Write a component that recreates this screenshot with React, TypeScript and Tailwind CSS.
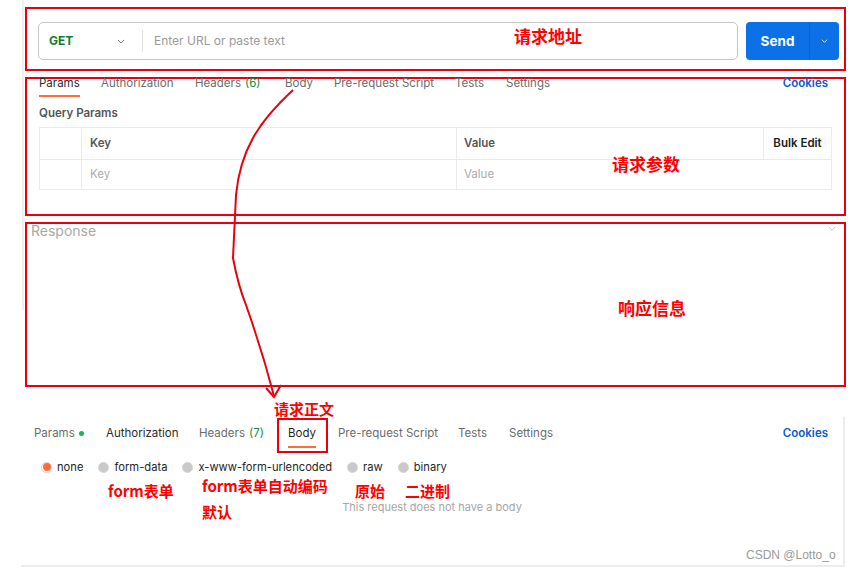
import React from 'react';

interface TabDef {
  label: string;
  w: string;
  count?: string;
  tone?: string;
  active?: boolean;
  dot?: boolean;
}

const topTabs: TabDef[] = [
  { label: 'Params', w: 'w-[62px]', active: true, tone: 'text-[#2b2b2b]' },
  { label: 'Authorization', w: 'w-[94px]' },
  { label: 'Headers', count: '(6)', w: 'w-[90px]' },
  { label: 'Body', w: 'w-[49px]' },
  { label: 'Pre-request Script', w: 'w-[121px]' },
  { label: 'Tests', w: 'w-[51px]' },
  { label: 'Settings', w: 'w-[60px]' },
];

const bottomTabs: TabDef[] = [
  { label: 'Params', w: 'w-[72px]', dot: true },
  { label: 'Authorization', w: 'w-[93px]', tone: 'text-[#2b2b2b]' },
  { label: 'Headers', count: '(7)', w: 'w-[89px]' },
  { label: 'Body', w: 'w-[50px]', active: true, tone: 'text-[#1f1f1f]' },
  { label: 'Pre-request Script', w: 'w-[120px]' },
  { label: 'Tests', w: 'w-[51px]' },
  { label: 'Settings', w: 'w-[60px]' },
];

const bodyTypes = ['none', 'form-data', 'x-www-form-urlencoded', 'raw', 'binary'];

function Chevron({ className }: { className?: string }) {
  return (
    <svg viewBox="0 0 10 6" className={className} fill="none" stroke="currentColor" strokeWidth={1.2}>
      <path d="M1 1l4 4 4-4" />
    </svg>
  );
}

function Tab({ tab, boxed }: { tab: TabDef; boxed?: boolean }) {
  return (
    <div className={`flex shrink-0 items-start ${tab.w}`}>
      <div className="relative flex flex-col">
        <span className={`flex items-center text-[11.5px] leading-[14px] whitespace-nowrap ${tab.tone ?? 'text-[#6b6b6b]'}`}>
          {tab.label}
          {tab.count && <span className="ml-[4px] text-[#168a45]">{tab.count}</span>}
          {tab.dot && <span className="ml-[4px] h-[5px] w-[5px] rounded-full bg-[#0cbb52]" />}
        </span>
        {tab.active && <div className={`${boxed ? 'mt-[6px]' : 'mt-[5px]'} h-[2px] bg-[#ff6c37]`} />}
        {boxed && (
          <span className="absolute -left-[11px] -top-[8px] h-[35px] w-[51px] border-2 border-[#e8000f]" />
        )}
      </div>
    </div>
  );
}

const note = "absolute font-['Noto_Sans_CJK_SC',sans-serif] font-bold leading-none text-[#f00] whitespace-nowrap";

export default function App() {
  return (
    <div className="relative h-[571px] w-[852px] overflow-hidden bg-white font-['Inter',sans-serif]">
      <div className="absolute left-[22px] top-0 h-[310px] w-[2px] bg-[#efefef]" />

      <div className="flex flex-col pl-[25px] pr-[6px] pt-[7px]">
        {/* request url */}
        <div className="flex h-[64px] gap-[8px] border-2 border-[#e8000f] pl-[11px] pt-[13px]">
          <div className="flex h-[38px] w-[700px] items-center rounded-[5px] border border-[#c8c8c8]">
            <div className="flex w-[103px] items-center justify-between pl-[10px] pr-[17px]">
              <span className="text-[12px] font-bold text-[#107c2e]">GET</span>
              <Chevron className="h-[5px] w-[8px] text-[#6b6b6b]" />
            </div>
            <div className="h-[22px] w-px bg-[#e3e3e3]" />
            <span className="pl-[11px] text-[12px] text-[#9b9b9b]">Enter URL or paste text</span>
          </div>
          <div className="flex h-[38px] w-[93px] overflow-hidden rounded-[4px] bg-[#0c71e6] text-white">
            <div className="flex w-[63px] items-center justify-center text-[13.5px] font-bold">Send</div>
            <div className="w-px bg-[#0b62c9]" />
            <div className="flex flex-1 items-center justify-center">
              <Chevron className="h-[4px] w-[7px] text-white" />
            </div>
          </div>
        </div>

        {/* request params */}
        <div className="mt-[6px] flex h-[139px] flex-col border-2 border-[#e8000f] px-[12px]">
          <div className="-mt-[3px] flex items-start pr-[4px]">
            {topTabs.map((t) => (
              <Tab key={t.label} tab={t} />
            ))}
            <span className="ml-auto text-[11.5px] font-semibold leading-[14px] text-[#0b5bd3]">Cookies</span>
          </div>
          <div className="mt-[9px] text-[11.5px] font-semibold leading-[14px] text-[#555]">Query Params</div>
          <div className="mt-[7px] border border-[#ebebeb] text-[11.5px]">
            <div className="flex h-[32px] border-b border-[#ebebeb]">
              <div className="w-[42px] border-r border-[#ebebeb]" />
              <div className="flex w-[375px] items-center border-r border-[#ebebeb] pl-[8px] font-semibold text-[#555]">Key</div>
              <div className="flex flex-1 items-center border-r border-[#ebebeb] pl-[7px] font-semibold text-[#555]">Value</div>
              <div className="flex w-[67px] items-center justify-center font-semibold text-[#212121]">Bulk Edit</div>
            </div>
            <div className="flex h-[29px]">
              <div className="w-[42px] border-r border-[#ebebeb]" />
              <div className="flex w-[375px] items-center border-r border-[#ebebeb] pl-[8px] text-[#ababab]">Key</div>
              <div className="flex flex-1 items-center pl-[7px] text-[#ababab]">Value</div>
            </div>
          </div>
        </div>

        {/* response */}
        <div className="mt-[6px] flex h-[165px] items-start justify-between border-2 border-[#e8000f] pl-[4px] pr-[7px]">
          <span className="-mt-[2.5px] text-[14px] leading-[17px] text-[#a8a8a8]">Response</span>
          <Chevron className="mt-[2px] h-[5px] w-[10px] text-[#c4c4c4]" />
        </div>
      </div>

      {/* body panel */}
      <div className="ml-[21px] mt-[30px] flex h-[150px] w-[824px] flex-col border-b-2 border-r-2 border-[#ececec] pt-[9px]">
        <div className="flex items-start pl-[13px] pr-[15px]">
          {bottomTabs.map((t) => (
            <Tab key={t.label} tab={t} boxed={t.label === 'Body'} />
          ))}
          <span className="ml-auto text-[11.5px] font-semibold leading-[14px] text-[#0b5bd3]">Cookies</span>
        </div>
        <div className="mt-[12px] flex items-center gap-[15px] pl-[20px]">
          {bodyTypes.map((b, i) => (
            <div key={b} className="flex items-center gap-[5px]">
              {i === 0 ? (
                <span className="flex h-[11px] w-[11px] items-center justify-center rounded-full border border-[#d4d4d4]">
                  <span className="h-[8px] w-[8px] rounded-full bg-[#ff6c37]" />
                </span>
              ) : (
                <span className="h-[11px] w-[11px] rounded-full border border-[#d6d6d6] bg-[#c9c9c9]" />
              )}
              <span className="text-[11.2px] leading-[14px] text-[#262626]">{b}</span>
            </div>
          ))}
        </div>
        <div className="mt-[26px] text-center text-[11px] leading-[14px] text-[#a6a6a6]">This request does not have a body</div>
      </div>

      <span className="absolute left-[746px] top-[548px] font-['Liberation_Sans',sans-serif] text-[12px] leading-[15px] text-[#9a9a9a]">
        CSDN @Lotto_o
      </span>

      {/* annotations */}
      <svg className="pointer-events-none absolute left-0 top-0" width={852} height={571} fill="none" stroke="#e8000f" strokeWidth={2}>
        <path d="M293 90 Q265 116 253 138 Q239 163 236 195 L233 258 Q238 285 246 305 Q262 350 274 396" />
        <path d="M266 388 L274 397 L281 385" />
      </svg>
      <span className={`${note} left-[514px] top-[27px] text-[17px]`}>请求地址</span>
      <span className={`${note} left-[612px] top-[155px] text-[17px]`}>请求参数</span>
      <span className={`${note} left-[618px] top-[299px] text-[17px]`}>响应信息</span>
      <span className={`${note} left-[274px] top-[401px] text-[15px]`}>请求正文</span>
      <span className={`${note} left-[108px] top-[483px] text-[15px]`}>form表单</span>
      <span className={`${note} left-[202px] top-[478px] text-[15px]`}>form表单自动编码</span>
      <span className={`${note} left-[355px] top-[483px] text-[15px]`}>原始</span>
      <span className={`${note} left-[405px] top-[483px] text-[15px]`}>二进制</span>
      <span className={`${note} left-[202px] top-[504px] text-[15px]`}>默认</span>
    </div>
  );
}
